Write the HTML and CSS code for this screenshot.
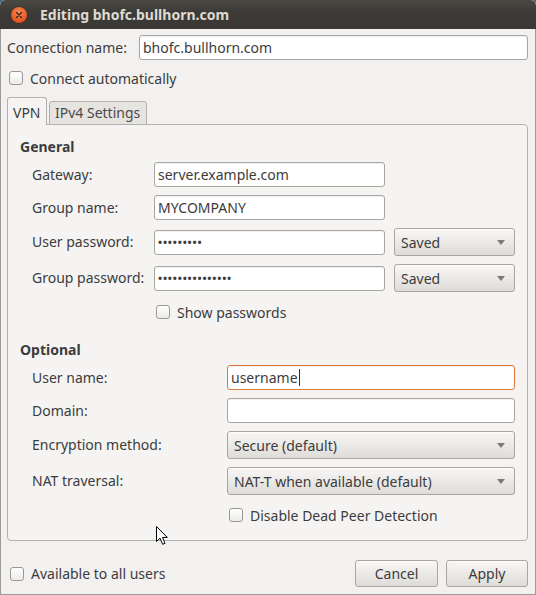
FILE: index.html
```html
<!DOCTYPE html>
<html>
<head>
<meta charset="utf-8">
<link rel="stylesheet" href="styles.css">
</head>
<body>
<div class="window">
  <div class="titlebar">
    <span class="close">
      <svg width="16" height="16" viewBox="0 0 16 16"><path d="M5.5 5.5 L10.5 10.5 M10.5 5.5 L5.5 10.5" stroke="#3b2a22" stroke-width="1.4" stroke-linecap="round"/></svg>
    </span>
    <span class="title">Editing bhofc.bullhorn.com</span>
  </div>
  <div class="main">
    <div class="conn-row">
      <span class="conn-label">Connection name:</span>
      <div class="entry grow">bhofc.bullhorn.com</div>
    </div>
    <div class="check-row auto">
      <span class="checkbox"></span><span>Connect automatically</span>
    </div>
    <div class="tabs">
      <div class="tab active">VPN</div>
      <div class="tab">IPv4 Settings</div>
    </div>
    <div class="panel">
      <div class="section-title">General</div>
      <div class="grid general">
        <span class="lbl">Gateway:</span>
        <div class="entry">server.example.com</div>
        <span></span>
        <span class="lbl">Group name:</span>
        <div class="entry">MYCOMPANY</div>
        <span></span>
        <span class="lbl">User password:</span>
        <div class="entry"><span class="dots">•••••••••</span></div>
        <div class="combo"><span>Saved</span><span class="arrow"></span></div>
        <span class="lbl">Group password:</span>
        <div class="entry"><span class="dots">•••••••••••••••</span></div>
        <div class="combo"><span>Saved</span><span class="arrow"></span></div>
        <span></span>
        <div class="check-row inset"><span class="checkbox"></span><span>Show passwords</span></div>
        <span></span>
      </div>
      <div class="section-title optional">Optional</div>
      <div class="grid opt">
        <span class="lbl">User name:</span>
        <div class="entry focus">username<span class="caret"></span></div>
        <span class="lbl">Domain:</span>
        <div class="entry"></div>
        <span class="lbl">Encryption method:</span>
        <div class="combo"><span>Secure (default)</span><span class="arrow"></span></div>
        <span class="lbl">NAT traversal:</span>
        <div class="combo"><span>NAT-T when available (default)</span><span class="arrow"></span></div>
        <span></span>
        <div class="check-row inset"><span class="checkbox"></span><span>Disable Dead Peer Detection</span></div>
      </div>
    </div>
    <div class="bottom">
      <div class="check-row avail"><span class="checkbox"></span><span>Available to all users</span></div>
      <div class="buttons">
        <div class="button cancel">Cancel</div>
        <div class="button apply">Apply</div>
      </div>
    </div>
  </div>
  <svg class="cursor" width="14" height="20" viewBox="0 0 14 20">
    <path d="M0.5 0.5 L0.5 15.5 L4 12.2 L6.6 18.3 L9 17.3 L6.5 11.4 L11.3 11.4 Z" fill="#fff" stroke="#000" stroke-width="1" stroke-linejoin="miter"/>
  </svg>
</div>
</body>
</html>
```

FILE: styles.css
```css
html, body {
  margin: 0;
  padding: 0;
  background: #35688a;
}
body {
  font-family: "Noto Sans", "Open Sans", sans-serif;
  font-size: 14px;
  color: #3c3c3c;
}
.window {
  position: relative;
  width: 536px;
  height: 595px;
  box-sizing: border-box;
  background: #f2f1f0;
  border-radius: 5px 5px 0 0;
  overflow: hidden;
  display: flex;
  flex-direction: column;
}
.titlebar {
  height: 29px;
  flex: none;
  display: flex;
  align-items: center;
  padding-left: 11px;
  background: linear-gradient(#4a4944, #3c3b37 40%, #393834);
  border-radius: 5px 5px 0 0;
}
.close {
  width: 16px;
  height: 16px;
  border-radius: 50%;
  background: radial-gradient(circle at 50% 35%, #f58a5a, #e6531f 70%, #c9441a);
  box-shadow: 0 0 0 0.5px #2a2926;
  display: flex;
  margin-top: 1px;
}
.title {
  margin-left: 13px;
  font-weight: bold;
  color: #dfdbd2;
  font-size: 14px;
  line-height: 20px;
}
.main {
  flex: 1;
  display: flex;
  flex-direction: column;
  padding: 6px 7px 0 6px;
  border: 1px solid #9d9b97;
  border-top: none;
}
.conn-row {
  display: flex;
  align-items: center;
  height: 25px;
}
.conn-label {
  width: 132px;
  flex: none;
}
.entry {
  height: 25px;
  box-sizing: border-box;
  border: 1px solid #a8a6a2;
  border-radius: 3px;
  background: #fff;
  padding: 0 3px;
  display: flex;
  align-items: center;
  line-height: 20px;
  color: #3c3c3c;
  box-shadow: inset 0 1px 1px rgba(0,0,0,0.06);
}
.grow { flex: 1; }
.entry.focus {
  border-color: #e0763f;
}
.caret {
  display: inline-block;
  width: 1px;
  height: 17px;
  background: #2e2e2e;
  margin-left: 1px;
}
.dots {
  font-size: 11px;
  letter-spacing: 0.8px;
  color: #3c3c3c;
  font-weight: bold;
}
.check-row {
  display: flex;
  align-items: center;
  height: 24px;
  gap: 7px;
}
.checkbox {
  width: 14px;
  height: 14px;
  box-sizing: border-box;
  border: 1px solid #9a9893;
  border-radius: 3px;
  background: linear-gradient(#ffffff, #ecebe9);
  flex: none;
}
.auto {
  margin-top: 6px;
  padding-left: 2px;
}
.tabs {
  margin-top: 7px;
  display: flex;
  align-items: flex-end;
  gap: 2px;
  margin-bottom: -1px;
  position: relative;
  z-index: 1;
}
.tab {
  box-sizing: border-box;
  border: 1px solid #b3b1ad;
  border-bottom: none;
  border-radius: 3px 3px 0 0;
  padding: 0 5px;
  display: flex;
  align-items: center;
  line-height: 20px;
}
.tab.active {
  width: 40px;
  height: 28px;
  background: #f5f4f3;
  padding-top: 2px;
}
.tab:not(.active) {
  width: 98px;
  height: 24px;
  background: #e6e4e1;
  border-bottom: 1px solid #b3b1ad;
  color: #4a4a4a;
  padding-left: 5px;
}
.panel {
  box-sizing: border-box;
  border: 1px solid #b3b1ad;
  border-radius: 0 4px 4px 4px;
  background: #f5f4f3;
  padding: 12px 12px 13px 12px;
}
.section-title {
  font-weight: bold;
  line-height: 20px;
  margin-bottom: 5px;
}
.section-title.optional {
  margin-top: 16px;
}
.grid {
  display: grid;
  margin-left: 12px;
  row-gap: 8px;
  align-items: center;
}
.general {
  grid-template-columns: 113px 231px 121px;
  grid-template-rows: 25px 25px 28px 28px 24px;
  column-gap: 9px;
}
.opt {
  grid-template-columns: 195px 288px;
  grid-template-rows: 25px 25px 28px 28px 24px;
}
.lbl {
  line-height: 20px;
}
.inset {
  padding-left: 2px;
}
.combo, .button {
  box-sizing: border-box;
  border: 1px solid #a9a6a0;
  border-radius: 3px;
  background: linear-gradient(#f8f7f6, #e9e7e4 60%, #dedcd8);
  box-shadow: inset 0 1px 0 rgba(255,255,255,0.8);
  display: flex;
  align-items: center;
}
.combo {
  height: 28px;
  padding: 0 9px 0 6px;
  justify-content: space-between;
}
.arrow {
  width: 0;
  height: 0;
  border-left: 4px solid transparent;
  border-right: 4px solid transparent;
  border-top: 5px solid #7b7975;
}
.bottom {
  margin-top: 19px;
  display: flex;
  align-items: center;
  justify-content: space-between;
  height: 27px;
}
.avail {
  padding-left: 3px;
}
.buttons {
  display: flex;
  gap: 8px;
}
.button {
  height: 27px;
  justify-content: center;
}
.cancel { width: 83px; }
.apply { width: 82px; }
.cursor {
  position: absolute;
  left: 156px;
  top: 526px;
}
```
